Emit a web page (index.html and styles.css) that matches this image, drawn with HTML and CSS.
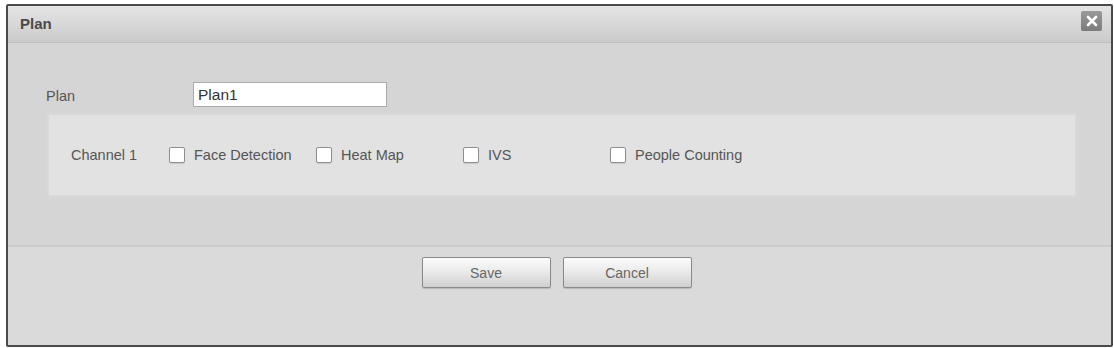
FILE: index.html
```html
<!DOCTYPE html>
<html lang="en">
<head>
    <meta charset="UTF-8">
    <title>Plan</title>
    <link rel="stylesheet" href="styles.css">
</head>
<body>
    <div class="dialog">
        <div class="dialog-header">
            <span class="dialog-title">Plan</span>
            <span class="close-btn">
                <svg width="12" height="12" viewBox="0 0 12 12">
                    <path d="M2 2 L10 10 M10 2 L2 10" stroke="#fff" stroke-width="2.6" stroke-linecap="round"/>
                </svg>
            </span>
        </div>
        <div class="dialog-body">
            <div class="plan-row">
                <label class="plan-label">Plan</label>
                <input class="plan-input" type="text" value="Plan1">
            </div>
            <div class="channel-panel">
                <span class="channel-name">Channel 1</span>
                <label class="check-item item-face"><span class="check-box"></span>Face Detection</label>
                <label class="check-item item-heat"><span class="check-box"></span>Heat Map</label>
                <label class="check-item item-ivs"><span class="check-box"></span>IVS</label>
                <label class="check-item"><span class="check-box"></span>People Counting</label>
            </div>
        </div>
        <div class="dialog-footer">
            <button class="btn">Save</button>
            <button class="btn">Cancel</button>
        </div>
    </div>
</body>
</html>
```

FILE: styles.css
```css
body {
    margin: 0;
    background: #ffffff;
    font-family: "Liberation Sans", Arial, sans-serif;
}
.dialog {
    margin: 4px 0 0 6px;
    width: 1103px;
    height: 339px;
    border: 2px solid #4a4a4a;
    border-radius: 2px;
    background: #d4d4d4;
    display: flex;
    flex-direction: column;
    box-shadow: inset 0 0 0 1px #e6e6e6;
}
.dialog-header {
    height: 36px;
    display: flex;
    align-items: center;
    justify-content: space-between;
    padding: 0 9px 0 12px;
    background: linear-gradient(#e4e4e4, #cbcbcb);
    border-bottom: 1px solid #c0c0c0;
}
.dialog-title {
    font-size: 15px;
    font-weight: bold;
    color: #4a4a4a;
    margin-top: -1px;
}
.close-btn {
    width: 21px;
    height: 20px;
    margin-top: -6px;
    border-radius: 2px;
    background: linear-gradient(#9a9a9a, #7c7c7c);
    display: flex;
    align-items: center;
    justify-content: center;
}
.dialog-body {
    height: 202px;
    padding: 39px 0 0 38px;
    box-sizing: border-box;
    background: #d5d5d5;
}
.plan-row {
    display: flex;
    align-items: center;
    height: 25px;
}
.plan-label {
    width: 147px;
    font-size: 14.5px;
    color: #555;
    margin-top: 3px;
}
.plan-input {
    width: 194px;
    height: 25px;
    box-sizing: border-box;
    border: 1px solid #aaa;
    padding: 0 4px;
    font-family: "Liberation Sans", Arial, sans-serif;
    font-size: 15.5px;
    color: #333;
    background: #fff;
    outline: none;
}
.channel-panel {
    margin: 7px 0 0 2px;
    width: 1028px;
    height: 82px;
    box-sizing: border-box;
    padding: 0 0 0 22px;
    display: flex;
    align-items: center;
    background: #e2e2e2;
    border: 1px solid #d9d9d9;
    box-shadow: 0 0 3px #dcdcdc;
    font-size: 14.5px;
    color: #555;
}
.channel-name {
    width: 98px;
}
.check-item {
    display: flex;
    align-items: center;
}
.item-face {
    width: 147px;
}
.item-heat {
    width: 147px;
}
.item-ivs {
    width: 147px;
}
.check-box {
    width: 14px;
    height: 14px;
    margin-right: 9px;
    border: 1px solid #8f8f8f;
    border-radius: 2px;
    background: #fff;
    box-shadow: 0 1px 1px #c8c8c8;
}
.dialog-footer {
    flex: 1;
    border-top: 2px solid #cacaca;
    background: #dadada;
    display: flex;
    justify-content: center;
    align-items: flex-start;
    gap: 12px;
    padding: 10px 6px 0 0;
}
.btn {
    width: 129px;
    height: 31px;
    border: 1px solid #8a8a8a;
    border-radius: 2px;
    background: linear-gradient(#fbfbfb, #e9e9e9 50%, #cfcfcf);
    box-shadow: 0 1px 1px #b8b8b8;
    font-family: "Liberation Sans", Arial, sans-serif;
    font-size: 14px;
    color: #666;
}
```
